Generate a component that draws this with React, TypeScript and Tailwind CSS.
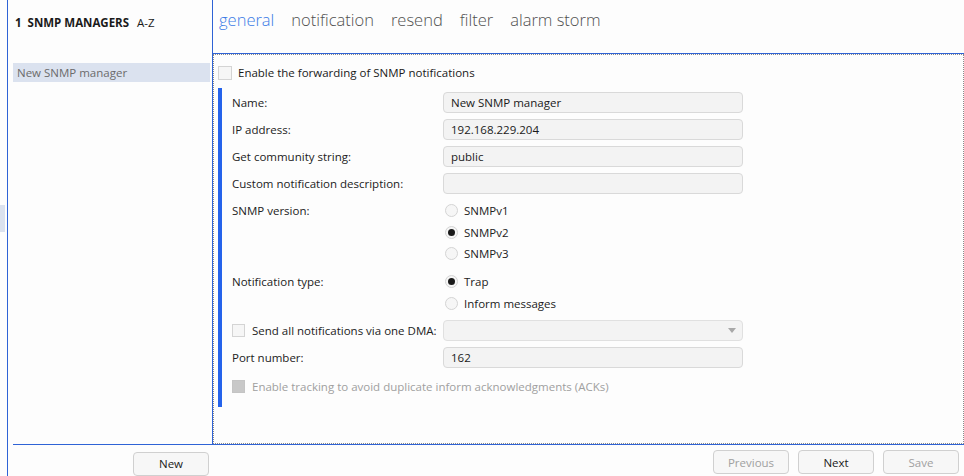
import React from "react";

const font = { fontFamily: '"Open Sans", "Noto Sans", sans-serif' };

function Field({ value = "" }: { value?: string }) {
  return (
    <div className="h-[21px] w-[300px] rounded-[4px] border border-[#d9d9d9] bg-[#f3f3f3] px-[7px] text-[11.5px] leading-[19px] text-[#1a1a1a]">
      {value}
    </div>
  );
}

function Radio({ label, checked = false }: { label: string; checked?: boolean }) {
  return (
    <div className="flex h-[21.5px] items-center gap-[6px] pl-[2px] text-[11.5px] text-[#222]">
      <span className="flex h-[13px] w-[13px] items-center justify-center rounded-full border border-[#d4d4d4] bg-[#f6f6f6]">
        {checked && <span className="h-[7px] w-[7px] rounded-full bg-[#1a1a1a]" />}
      </span>
      {label}
    </div>
  );
}

function Row({ label, children, className = "" }: { label: React.ReactNode; children: React.ReactNode; className?: string }) {
  return (
    <div className={`flex ${className}`}>
      <div className="w-[211px] shrink-0 whitespace-nowrap text-[11.5px] leading-[21px] text-[#222]">{label}</div>
      {children}
    </div>
  );
}

function Button({ label, disabled = false }: { label: string; disabled?: boolean }) {
  return (
    <button
      className={`h-[24px] w-[76px] rounded-[4px] border border-[#d0d0d0] bg-[#f7f7f7] text-[11.5px] ${disabled ? "text-[#a0a0a0]" : "text-[#1a1a1a]"}`}
    >
      {label}
    </button>
  );
}

export default function App() {
  return (
    <div className="flex h-[476px] w-[964px] overflow-hidden bg-[#fdfdfd]" style={font}>
      {/* side tab */}
      <div className="w-[7px] shrink-0">
        <div className="mt-[205px] h-[27px] w-[5px] bg-[#dbe2ef]" />
      </div>

      <div className="flex flex-1 flex-col border-l border-[#2f63d6]">
        <div className="flex h-[447px]">
          {/* managers list */}
          <div className="w-[204px] shrink-0">
            <div className="flex h-[45px] items-center gap-[8px] pl-[7px] text-[11.5px] text-[#1a1a1a]">
              <span className="font-bold">1&nbsp;&nbsp;SNMP MANAGERS</span>
              <span>A-Z</span>
            </div>
            <div className="ml-[5px] mr-[2px] mt-[18px] h-[19px] bg-[#dbe2ef] pl-[4px] text-[11.5px] leading-[19px] text-[#6b6b6b]">
              New SNMP manager
            </div>
          </div>

          <div className="flex flex-1 flex-col border-l border-[#2f63d6]">
            {/* tabs */}
            <div className="flex h-[54px] items-start gap-[17px] border-b border-[#2f63d6] pl-[6px] pt-[8px] text-[16.5px] font-light text-[#505050]">
              <span className="text-[#3a7be6]">general</span>
              <span>notification</span>
              <span>resend</span>
              <span>filter</span>
              <span>alarm storm</span>
            </div>

            {/* content */}
            <div className="flex-1 border border-dotted border-[#8a8a8a] pl-[4px] pr-[4px]">
              <div className="flex h-[33px] items-center gap-[6px] pt-[2px] text-[11.5px] text-[#1a1a1a]">
                <span className="h-[14px] w-[14px] border border-[#d4d4d4] bg-[#f6f6f6]" />
                Enable the forwarding of SNMP notifications
              </div>

              <div className="flex">
                <div className="w-[4px] shrink-0 bg-[#2563eb]" />
                <div className="flex flex-col pb-[6px] pl-[10px] pt-[4px]">
                  <Row label="Name:" className="h-[27px]"><Field value="New SNMP manager" /></Row>
                  <Row label="IP address:" className="h-[27px]"><Field value="192.168.229.204" /></Row>
                  <Row label="Get community string:" className="h-[27px]"><Field value="public" /></Row>
                  <Row label="Custom notification description:" className="h-[27px]"><Field /></Row>
                  <Row label="SNMP version:" className="h-[71px]">
                    <div className="flex flex-col">
                      <Radio label="SNMPv1" />
                      <Radio label="SNMPv2" checked />
                      <Radio label="SNMPv3" />
                    </div>
                  </Row>
                  <Row label="Notification type:" className="h-[49px]">
                    <div className="flex flex-col">
                      <Radio label="Trap" checked />
                      <Radio label="Inform messages" />
                    </div>
                  </Row>
                  <Row
                    className="h-[27px]"
                    label={
                      <div className="flex h-[21px] items-center gap-[7px]">
                        <span className="h-[13px] w-[13px] border border-[#d4d4d4] bg-[#f6f6f6]" />
                        Send all notifications via one DMA:
                      </div>
                    }
                  >
                    <div className="flex h-[21px] w-[300px] items-center justify-end rounded-[4px] border border-[#e0e0e0] bg-[#f3f3f3] pr-[6px]">
                      <svg width="8" height="5" viewBox="0 0 8 5"><path d="M0 0h8L4 5z" fill="#a8a8a8" /></svg>
                    </div>
                  </Row>
                  <Row label="Port number:" className="h-[25px]"><Field value="162" /></Row>
                  <div className="flex h-[29px] items-center gap-[7px] text-[11.5px] text-[#a0a0a0]">
                    <span className="h-[13px] w-[13px] border border-[#c4c4c4] bg-[#c8c8c8]" />
                    Enable tracking to avoid duplicate inform acknowledgments (ACKs)
                  </div>
                </div>
              </div>
            </div>
          </div>
        </div>

        {/* footer */}
        <div className="ml-[5px] flex flex-1 items-start border-t border-[#2f63d6] pt-[5px]">
          <div className="ml-[120px]"><Button label="New" /></div>
          <div className="ml-auto mr-[5px] flex gap-[9px]">
            <Button label="Previous" disabled />
            <Button label="Next" />
            <Button label="Save" disabled />
          </div>
        </div>
      </div>
    </div>
  );
}
